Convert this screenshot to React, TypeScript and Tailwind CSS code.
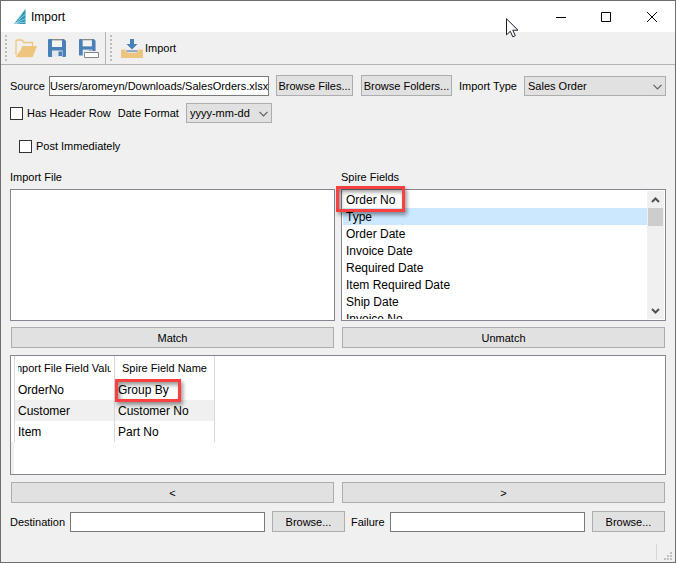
import { useState } from "react";
import type { ReactNode } from "react";
import { clsx } from "clsx";

const spireFields = [
  "Order No",
  "Type",
  "Order Date",
  "Invoice Date",
  "Required Date",
  "Item Required Date",
  "Ship Date",
  "Invoice No",
];

const mappings = [
  { file: "OrderNo", spire: "Group By" },
  { file: "Customer", spire: "Customer No" },
  { file: "Item", spire: "Part No" },
];

function PushButton({ children, className }: { children: ReactNode; className?: string }) {
  return (
    <button
      type="button"
      className={clsx("h-[21px] border border-[#adadad] bg-[#e1e1e1] text-center whitespace-nowrap", className)}
    >
      {children}
    </button>
  );
}

function Chevron({ className }: { className?: string }) {
  return (
    <svg viewBox="0 0 9 6" className={className} fill="none" stroke="#606060" strokeWidth="1.2">
      <path d="M0.5 0.8 4.5 4.8 8.5 0.8" />
    </svg>
  );
}

function Dropdown({ id, value, className }: { id: string; value: string; className?: string }) {
  return (
    <div className={clsx("relative h-5", className)}>
      <select
        id={id}
        defaultValue={value}
        className="block h-full w-full appearance-none border border-[#adadad] bg-[#e1e1e1] pl-[3px] text-[11px] leading-4"
      >
        <option>{value}</option>
      </select>
      <Chevron className="pointer-events-none absolute top-2 right-1 h-[6px] w-[9px]" />
    </div>
  );
}

function CheckBox({ label }: { label: string }) {
  return (
    <label className="flex items-center gap-1">
      <input type="checkbox" className="size-[13px] appearance-none border border-[#333] bg-white checked:bg-[#333]" />
      {label}
    </label>
  );
}

// Dotted handle at the left of each toolbar group
function Grip() {
  return (
    <svg viewBox="0 0 3 28" className="h-7 w-[3px]" fill="#bcbcbc">
      {[1, 5, 9, 13, 17, 21, 25].map((y) => (
        <rect key={y} x="0" y={y} width="2" height="2" />
      ))}
    </svg>
  );
}

function TitleBar() {
  return (
    <header className="flex h-[31px] items-center bg-white pl-[13px]">
      <svg viewBox="0 0 12 16" className="h-4 w-3">
        <path d="M11.500 0 4 9.500 0 15h11.500Z" fill="#2795b5" />
        <path d="M11.500 5 1 14.500M11.500 9.500 1 14.500M11.500 13 1 14.700M8 4.500 4 10.500" stroke="#c4e6ee" strokeWidth="0.700" />
      </svg>
      <h1 className="ml-[5px] text-[12px]">Import</h1>
      <div className="ml-auto flex h-full">
        <button type="button" aria-label="Minimize" className="flex w-[45px] items-center justify-center">
          <svg viewBox="0 0 10 10" className="size-[10px]" stroke="#000">
            <path d="M0 5.5h10" />
          </svg>
        </button>
        <button type="button" aria-label="Maximize" className="flex w-[45px] items-center justify-center">
          <svg viewBox="0 0 10 10" className="size-[10px]" fill="none" stroke="#000">
            <path d="M.5.5h9v9h-9z" />
          </svg>
        </button>
        <button type="button" aria-label="Close" className="flex w-[47px] items-center justify-center">
          <svg viewBox="0 0 10 10" className="size-[10px]" stroke="#000">
            <path d="m0 0 10 10M10 0 0 10" />
          </svg>
        </button>
      </div>
    </header>
  );
}

function SaveShape() {
  return (
    <>
      <path d="M1 0h15l2 2v15q0 1-1 1H1q-1 0-1-1V1q0-1 1-1z" fill="#4a80b8" />
      <path d="M4 0h10v8H4z" fill="#f3f3f1" />
      <path d="M4 0h10v1.400H4z" fill="#8a8a82" />
      <path d="M4 11.500h10.500V18H4z" fill="#e4e9ee" />
      <path d="M10.500 12.500h3.500V17h-3.500z" fill="#4a80b8" />
    </>
  );
}

function Toolbar() {
  return (
    <div className="flex h-[33px] items-center border-b border-[#b4b4b4] pl-1">
      <Grip />
      <button type="button" aria-label="Open" className="ml-[7px]">
        <svg viewBox="0 0 22 19" className="h-[19px] w-[22px]">
          <path d="M1 16V2.5Q1 1 2.500 1H7l2 2.500h8.500V7" fill="none" stroke="#eec57c" strokeWidth="1.300" />
          <path d="M7 7h15l-4 10.500q-.4.800-1.500.800H2Q1 18.300 1.300 17L4.500 12.500Q6 11.800 7 7Z" fill="#eec57c" />
        </svg>
      </button>
      <button type="button" aria-label="Save" className="ml-[11px]">
        <svg viewBox="0 0 18 18" className="size-[18px]">
          <SaveShape />
        </svg>
      </button>
      <button type="button" aria-label="Save as" className="ml-[13px]">
        <svg viewBox="0 0 20 20" className="size-5">
          <g transform="translate(0 1) scale(0.92)">
            <SaveShape />
          </g>
          <path d="M5.500 14.500h14v5h-14z" fill="#fff" stroke="#efefef" strokeWidth="3" />
          <path d="M5.500 14.500h14v5h-14z" fill="#fff" stroke="#858580" />
        </svg>
      </button>
      <div className="ml-[6px] h-full w-px bg-[#b4b4b4]" />
      <div className="ml-1">
        <Grip />
      </div>
      <button type="button" className="ml-2 flex items-center gap-[2px]">
        <svg viewBox="0 0 22 20" className="h-5 w-[22px]">
          <path d="M0 11.500h4q.5 3 4 3.500h6q3.500-.5 4-3.500h4V20H0z" fill="#eec57c" />
          <path d="M9 1h4v5h3.500L11 11.500 5.500 6H9z" fill="#4a80b8" />
          <path d="M4.500 11.500q.5 2 3 2.500h7q2.500-.5 3-2.500" fill="none" stroke="#c9d3da" />
          <path d="M5.500 13h11" stroke="#7c97ad" strokeWidth="1.500" />
        </svg>
        Import
      </button>
    </div>
  );
}

function FieldList() {
  const [selected, setSelected] = useState("Type");

  return (
    <div className="relative">
      <div className="flex h-[132px] border border-[#828790] bg-white p-px">
        <ul role="listbox" aria-labelledby="spire-fields" className="min-w-0 flex-1 overflow-hidden text-[12px] leading-[18px]">
          {spireFields.map((field) => (
            <li
              key={field}
              role="option"
              aria-selected={field === selected}
              onClick={() => setSelected(field)}
              className={clsx("h-[17px] pl-[3px]", field === selected && "bg-[#cce8ff]")}
            >
              {field}
            </li>
          ))}
        </ul>
        <div className="flex w-[17px] flex-col items-center bg-[#f0f0f0]">
          <button type="button" aria-label="Scroll up" className="flex h-[17px] items-center">
            <svg viewBox="0 0 9 6" className="h-[6px] w-[9px]" fill="none" stroke="#505050" strokeWidth="2">
              <path d="m1 5 3.500-3.500L8 5" />
            </svg>
          </button>
          <div className="h-[18px] w-[15px] bg-[#cdcdcd]" />
          <button type="button" aria-label="Scroll down" className="mt-auto flex h-[17px] items-center">
            <svg viewBox="0 0 9 6" className="h-[6px] w-[9px]" fill="none" stroke="#505050" strokeWidth="2">
              <path d="m1 1 3.500 3.500L8 1" />
            </svg>
          </button>
        </div>
      </div>
      <Highlight className="-top-[3px] -left-[5px] h-[26px] w-[69px]" />
    </div>
  );
}

// Red call-out frame laid over a value
function Highlight({ className }: { className: string }) {
  return (
    <div
      className={clsx(
        "pointer-events-none absolute border-3 border-[#fc4040] shadow-[2px_3px_4px_rgba(0,0,0,0.4),inset_2px_3px_4px_rgba(0,0,0,0.4)]",
        className,
      )}
    />
  );
}

function MappingTable() {
  return (
    <div className="flex min-h-[120px] flex-1 border border-[#828790] bg-white">
      <div className="mt-[86px] w-[3px] bg-[#f0f0f0]" />
      <table className="h-[86px] w-[201px] table-fixed border-collapse self-start">
        <thead>
          <tr className="h-[23px]">
            {["Import File Field Value", "Spire Field Name"].map((name) => (
              <th key={name} className="border-x border-[#d8d8d8] px-[3px] py-0 font-normal">
                <div className="flex justify-center overflow-hidden whitespace-nowrap">{name}</div>
              </th>
            ))}
          </tr>
        </thead>
        <tbody className="text-[12px] leading-4">
          {mappings.map((m) => (
            <tr key={m.file} className="h-[21px] even:bg-[#f0f0f0]">
              <td className="border-x border-[#d8d8d8] px-[3px] py-0">{m.file}</td>
              <td className="relative border-x border-[#d8d8d8] px-[3px] py-0">
                {m.spire}
                {m.spire === "Group By" && <Highlight className="top-0 left-0 h-[23px] w-[66px]" />}
              </td>
            </tr>
          ))}
        </tbody>
      </table>
    </div>
  );
}

function PathInput({ id }: { id: string }) {
  return <input id={id} type="text" className="h-5 min-w-0 flex-1 border border-[#7a7a7a] bg-white px-1" />;
}

export default function App() {
  const [source, setSource] = useState("Users/aromeyn/Downloads/SalesOrders.xlsx");

  return (
    <div className="relative flex min-h-screen flex-col border border-[#6e6e6e] bg-[#f0f0f0] font-['Liberation_Sans',sans-serif] text-[11px] leading-4 text-black">
      <TitleBar />
      <Toolbar />

      <main className="flex flex-1 flex-col px-[9px]">
        <div className="mt-[10px] flex items-center">
          <label htmlFor="source" className="w-[39px]">Source</label>
          <input
            id="source"
            type="text"
            value={source}
            onChange={(e) => setSource(e.target.value)}
            className="h-5 min-w-0 flex-1 border border-[#7a7a7a] bg-white"
          />
          <PushButton className="ml-[7px] w-[77px]">Browse Files...</PushButton>
          <PushButton className="ml-2 w-[91px]">Browse Folders...</PushButton>
          <label htmlFor="import-type" className="ml-[7px] w-[65px]">Import Type</label>
          <Dropdown id="import-type" value="Sales Order" className="w-[142px]" />
        </div>

        <div className="mt-[7px] flex items-center">
          <CheckBox label="Has Header Row" />
          <label htmlFor="date-format" className="mx-[7px]">Date Format</label>
          <Dropdown id="date-format" value="yyyy-mm-dd" className="w-[86px]" />
        </div>

        <div className="mt-[15px] pl-[9px]">
          <CheckBox label="Post Immediately" />
        </div>

        <div className="mt-[15px] grid grid-cols-2 gap-x-[6px]">
          <h2 className="mb-1">Import File</h2>
          <h2 id="spire-fields" className="mb-1">Spire Fields</h2>
          <div className="border border-[#828790] bg-white" />
          <FieldList />
        </div>

        <div className="mt-[6px] mb-[7px] grid grid-cols-2 gap-x-2 px-px">
          <PushButton>Match</PushButton>
          <PushButton>Unmatch</PushButton>
        </div>

        <MappingTable />

        <div className="mt-[7px] grid grid-cols-2 gap-x-2 px-px">
          <PushButton>&lt;</PushButton>
          <PushButton>&gt;</PushButton>
        </div>

        <div className="mt-2 flex items-center pr-px">
          <label htmlFor="destination" className="w-[60px]">Destination</label>
          <PathInput id="destination" />
          <PushButton className="ml-[7px] w-[73px]">Browse...</PushButton>
          <label htmlFor="failure" className="ml-[6px] w-[39px]">Failure</label>
          <PathInput id="failure" />
          <PushButton className="ml-[7px] w-[73px]">Browse...</PushButton>
        </div>
      </main>

      <footer className="mt-3 flex h-[18px] justify-end pr-[3px] pb-[2px]">
        <div className="w-px bg-[#d7d7d7]" />
        <svg viewBox="0 0 8 8" className="ml-[7px] size-2 self-end" fill="#bfbfbf">
          <path d="M6 0h2v2H6zM3 3h2v2H3zM6 3h2v2H6zM0 6h2v2H0zM3 6h2v2H3zM6 6h2v2H6z" />
        </svg>
      </footer>

      {/* Mouse pointer */}
      <svg viewBox="0 0 13 20" className="pointer-events-none absolute top-[17px] right-[156px] h-5 w-[13px]">
        <path d="M.5.800v16l3.800-3.500 2.500 5.500 2.500-1.100L6.800 12.200h5.200Z" fill="#fff" stroke="#1c1c2c" />
      </svg>
    </div>
  );
}
